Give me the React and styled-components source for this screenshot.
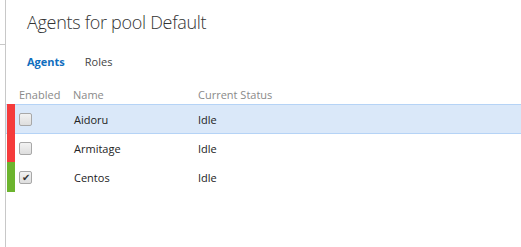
import React from "react";
import styled, { createGlobalStyle } from "styled-components";

const agents = [
  { name: "Aidoru", status: "Idle", enabled: false, selected: true },
  { name: "Armitage", status: "Idle", enabled: false },
  { name: "Centos", status: "Idle", enabled: true },
];

function App() {
  return (
    <>
      <GlobalStyle />
      <Page>
        <Rail>
          <RailTick />
        </Rail>
        <Main>
          <Title>Agents for pool Default</Title>
          <Tabs>
            <Tab active>Agents</Tab>
            <Tab>Roles</Tab>
          </Tabs>
          <HeaderRow>
            <EnabledCol>Enabled</EnabledCol>
            <NameCol>Name</NameCol>
            <StatusCol>Current Status</StatusCol>
          </HeaderRow>
          {agents.map((a) => (
            <Row key={a.name} selected={a.selected}>
              <StateBar enabled={a.enabled} />
              <CheckCell>
                <Check>{a.enabled ? "✔" : ""}</Check>
              </CheckCell>
              <NameCell>{a.name}</NameCell>
              <StatusCell>{a.status}</StatusCell>
            </Row>
          ))}
        </Main>
      </Page>
    </>
  );
}

const GlobalStyle = createGlobalStyle`
  body {
    margin: 0;
    background: #fff;
    font-family: "Open Sans", "Noto Sans", sans-serif;
    color: #222;
  }
`;

const Page = styled.div`
  display: flex;
  height: 247px;
  overflow: hidden;
`;

const Rail = styled.div`
  width: 5px;
  border-right: 1px solid #c8c8c8;
  flex-shrink: 0;
`;

const RailTick = styled.div`
  height: 44px;
  border-bottom: 1px solid #c8c8c8;
`;

const Main = styled.div`
  flex: 1;
  display: flex;
  flex-direction: column;
`;

const Title = styled.h1`
  margin: 0;
  padding: 9px 0 0 21px;
  font-size: 18px;
  font-weight: 300;
  line-height: 27px;
  letter-spacing: -0.3px;
  color: #333;
`;

const Tabs = styled.div`
  display: flex;
  gap: 20px;
  padding: 18px 0 0 21px;
  height: 26px;
`;

const Tab = styled.span`
  font-size: 11px;
  line-height: 16px;
  font-weight: ${(p) => (p.active ? 700 : 400)};
  color: ${(p) => (p.active ? "#106ebe" : "#444")};
`;

const HeaderRow = styled.div`
  display: flex;
  align-items: center;
  height: 20px;
  margin-top: 4px;
  font-size: 11px;
  color: #8a8a8a;
`;

const EnabledCol = styled.span`
  width: 54px;
  padding-left: 13px;
`;

const NameCol = styled.span`
  width: 125px;
`;

const StatusCol = styled.span``;

const Row = styled.div`
  display: flex;
  align-items: center;
  height: 28px;
  background: ${(p) => (p.selected ? "#dae8f9" : "transparent")};
  border-top: 1px solid ${(p) => (p.selected ? "#b5d3f6" : "transparent")};
  border-bottom: 1px solid ${(p) => (p.selected ? "#b5d3f6" : "transparent")};
  font-size: 11px;
  color: #222;
  margin-top: ${(p) => (p.selected ? "0" : "-1px")};
`;

const StateBar = styled.div`
  align-self: stretch;
  margin: -1px 0 -1px 1px;
  width: 8px;
  background: ${(p) => (p.enabled ? "#6cb42e" : "#f53b3b")};
`;

const CheckCell = styled.div`
  width: 55px;
  padding-left: 4px;
  display: flex;
`;

const Check = styled.span`
  width: 11px;
  height: 11px;
  border: 1px solid #a8a8a8;
  border-radius: 2px;
  background: linear-gradient(#f2f2f2, #dedede);
  font-size: 10px;
  line-height: 11px;
  text-align: center;
  color: #333;
`;

const NameCell = styled.span`
  width: 124px;
`;

const StatusCell = styled.span``;

export default App;
